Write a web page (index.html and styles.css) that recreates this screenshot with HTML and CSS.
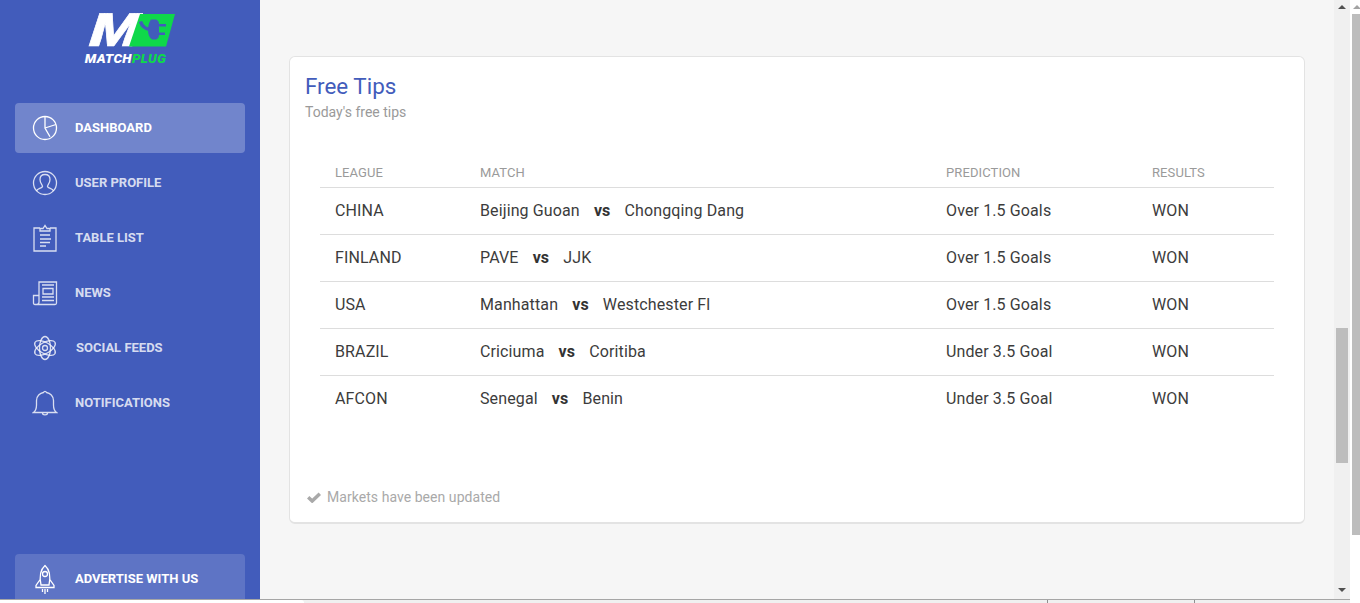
FILE: index.html
```html
<!DOCTYPE html>
<html lang="en">
<head>
<meta charset="utf-8">
<title>Free Tips</title>
<link rel="stylesheet" href="styles.css">
</head>
<body>
<div class="window">
  <div class="frame">
    <aside class="sidebar">
      <div class="logo">
        <div class="logo-mark">
          <span class="logo-m">M</span>
          <svg class="logo-plug" viewBox="0 0 47 34" width="47" height="34">
            <path d="M11 1H46L37 33.500H0Z" fill="#0fd84a"/>
            <path d="M11.500 8.500C13 13 16 16 21 16.500" fill="none" stroke="#425cbb" stroke-width="3.500"/>
            <path d="M22 6.500C20 9 19 13 19 17C19 21 20 24.500 23 26.500H27C29 25.500 30 24 30 22H36V19.500H30V13.500H37V11H30C30 9 29 7 27 6.500Z" fill="#425cbb"/>
          </svg>
        </div>
        <div class="logo-word"><span class="word-white">MATCH</span><span class="word-green">PLUG</span></div>
      </div>
      <nav class="nav">
        <a class="nav-item active">
          <svg class="nav-icon" viewBox="0 0 26 26"><circle cx="13" cy="13" r="11.500"/><path d="M13 1.500V13L18 21.800M13 13L24 9.500"/></svg>
          <span>DASHBOARD</span>
        </a>
        <a class="nav-item">
          <svg class="nav-icon" viewBox="0 0 26 26"><circle cx="13" cy="13" r="11.500"/><path d="M4.500 21C5 18.500 10 18.500 10.500 16.500C10.500 15 8 13 8 9.500C8 6.500 10 4.500 13 4.500C16 4.500 18 6.500 18 9.500C18 13 15.500 15 15.500 16.500C16 18.500 21 18.500 21.500 21"/></svg>
          <span>USER PROFILE</span>
        </a>
        <a class="nav-item">
          <svg class="nav-icon tall-28" viewBox="0 0 26 28"><path d="M8 4H2V27H24V4H18M8 7H18V4.500H15L13 1.500L11 4.500H8ZM8 11H18M8 15H19M8 18.500H18M8 22H14"/></svg>
          <span>TABLE LIST</span>
        </a>
        <a class="nav-item">
          <svg class="nav-icon" viewBox="0 0 26 26"><path d="M7 18V2H24.500V23C24.500 24 24 24.500 23 24.500H3C2 24.500 1.500 24 1.500 23V15.500H7M3.500 24.500C6 24.500 7 23.500 7 22V18M10 5H22M11 8.500H21V14H11ZM10 17H22M10 20.500H22"/></svg>
          <span>NEWS</span>
        </a>
        <a class="nav-item social">
          <svg class="nav-icon" viewBox="0 0 26 26"><circle cx="13" cy="13" r="2.500"/><ellipse cx="13" cy="13" rx="5.500" ry="11.500"/><ellipse cx="13" cy="13" rx="5.500" ry="11.500" transform="rotate(60 13 13)"/><ellipse cx="13" cy="13" rx="5.500" ry="11.500" transform="rotate(120 13 13)"/></svg>
          <span>SOCIAL FEEDS</span>
        </a>
        <a class="nav-item">
          <svg class="nav-icon" viewBox="0 0 26 26"><path d="M1.500 22.500C3.500 21 4.500 19 4.500 15V10.500C4.500 6 8 3 11.500 2.500C12 1 14 1 14.500 2.500C18 3 21.500 6 21.500 10.500V15C21.500 19 22.500 21 24.500 22.500ZM10.500 23C10.500 25.500 15.500 25.500 15.500 23"/></svg>
          <span>NOTIFICATIONS</span>
        </a>
      </nav>
      <a class="nav-item promo">
        <svg class="nav-icon tall-30" viewBox="0 0 26 30"><path d="M9 21C7.500 14 8 6 13 1.500C18 6 18.500 14 17 21ZM8.500 15L4 21.500V23.500H22V21.500L17.500 15M10.500 25V28M13 25V30M15.500 25V28"/><circle cx="13" cy="10" r="2.500"/></svg>
        <span>ADVERTISE WITH US</span>
      </a>
    </aside>
    <main class="content">
      <section class="card">
        <h2 class="card-title">Free Tips</h2>
        <p class="card-sub">Today's free tips</p>
        <table class="tips">
          <thead>
            <tr><th class="c-league">LEAGUE</th><th class="c-match">MATCH</th><th class="c-pred">PREDICTION</th><th class="c-res">RESULTS</th></tr>
          </thead>
          <tbody>
            <tr><td>CHINA</td><td>Beijing Guoan <b>vs</b> Chongqing Dang</td><td>Over 1.5 Goals</td><td>WON</td></tr>
            <tr><td>FINLAND</td><td>PAVE <b>vs</b> JJK</td><td>Over 1.5 Goals</td><td>WON</td></tr>
            <tr><td>USA</td><td>Manhattan <b>vs</b> Westchester Fl</td><td>Over 1.5 Goals</td><td>WON</td></tr>
            <tr><td>BRAZIL</td><td>Criciuma <b>vs</b> Coritiba</td><td>Under 3.5 Goal</td><td>WON</td></tr>
            <tr><td>AFCON</td><td>Senegal <b>vs</b> Benin</td><td>Under 3.5 Goal</td><td>WON</td></tr>
          </tbody>
        </table>
        <div class="card-foot">
          <svg class="check" viewBox="0 0 14 11" width="14" height="11"><path d="M1.200 5.300L5.200 9L12.800 1.800" fill="none" stroke="#a9a9a9" stroke-width="3.500"/></svg>
          <span>Markets have been updated</span>
        </div>
      </section>
    </main>
    <div class="scroll-inner">
      <span class="arrow-up"></span>
      <div class="track"><div class="thumb"></div></div>
      <span class="arrow-down"></span>
    </div>
  </div>
  <div class="scroll-outer">
    <span class="arrow-outer"></span>
    <div class="thumb-outer"></div>
  </div>
  <div class="statusbar">
    <div class="status-white"></div>
    <div class="status-cell wide"></div>
    <div class="status-cell mid"></div>
    <div class="status-cell"></div>
  </div>
</div>
</body>
</html>
```
FILE: styles.css
```css
* { box-sizing: border-box; }
html, body { margin: 0; padding: 0; height: 603px; overflow: hidden; background: #fff; }
body { font-family: Roboto, "Liberation Sans", sans-serif; color: #333; }

.window { position: relative; width: 1360px; height: 603px; overflow: hidden; }
.frame { display: flex; width: 1350px; height: 599px; overflow: hidden; background: #f6f6f6; }

.sidebar { width: 260px; flex: none; height: 604px; background: #425cbb; display: flex; flex-direction: column; padding: 0 15px; }
.logo { height: 103px; padding-top: 13px; display: flex; flex-direction: column; align-items: center; }
.logo-mark { display: flex; align-items: flex-start; height: 34px; margin-left: 6px; }
.logo-m { font: italic 900 46px/34px Roboto, sans-serif; color: #fff; width: 39px; -webkit-text-stroke: .6px #fff; transform: scaleX(1.25) skewX(-5deg); transform-origin: left bottom; margin-left: -1px; margin-right: 1px; }
.logo-plug { display: block; position: relative; }
.logo-word { font: italic 900 13.500px/14px Roboto, sans-serif; margin-top: 4px; margin-left: -9px; letter-spacing: .3px; }
.word-white { color: #fff; }
.word-green { color: #0fd84a; }

.nav { flex: 1; display: flex; flex-direction: column; gap: 5px; }
.nav-item { display: flex; align-items: center; height: 50px; flex: none; padding-left: 17px; border-radius: 4px; color: rgba(255,255,255,.8); font-size: 13px; font-weight: 700; }
.nav-item span { margin-left: 17px; padding-bottom: 2px; }
.nav-item.active { background: rgba(255,255,255,.25); color: #fff; }
.nav-item.promo { background: rgba(255,255,255,.15); color: #fff; }
.nav-item.social span { margin-left: 18px; }
.nav-icon { width: 26px; height: 26px; flex: none; fill: none; stroke: currentColor; stroke-width: 1.300; }
.nav-icon.tall-28 { height: 28px; }
.nav-icon.tall-30 { height: 30px; }

.content { flex: 1; min-width: 0; padding: 56px 29px 0; }
.card { height: 468px; background: #fff; border: 1px solid #e3e3e3; border-bottom-width: 2px; border-radius: 6px; padding: 14px 15px 0; position: relative; display: flex; flex-direction: column; }
.card-title { margin: 0; font-size: 22.400px; font-weight: 400; line-height: 30px; color: #425cbb; }
.card-sub { margin: 1px 0 0; font-size: 14px; line-height: 20px; color: #9a9a9a; }
.tips { width: 954px; margin: 35px 0 0 15px; border-collapse: collapse; table-layout: fixed; }
.tips th { height: 30px; padding: 2px 15px 0; text-align: left; font-size: 13px; letter-spacing: .1px; font-weight: 400; color: #9a9a9a; border-bottom: 1px solid #ddd; }
.tips td { height: 47px; padding: 0 15px; font-size: 16px; letter-spacing: .12px; color: #3c3c3c; border-bottom: 1px solid #ddd; white-space: nowrap; }
.tips tbody tr:last-child td { border-bottom: 0; }
.tips b { font-weight: 700; margin: 0 10px; color: #333; }
.c-league { width: 145px; }
.c-match { width: 466px; }
.c-pred { width: 206px; }
.c-res { width: 137px; }
.card-foot { margin-top: auto; margin-bottom: 15px; display: flex; align-items: center; gap: 6px; padding-left: 2px; height: 20px; font-size: 14px; letter-spacing: .05px; color: #a9a9a9; }

.scroll-inner { width: 16px; flex: none; background: #f0f0f0; display: flex; flex-direction: column; align-items: center; position: relative; }
.arrow-up { margin-top: 5px; border: 4px solid transparent; border-top: 0; border-bottom: 4px solid #505050; }
.track { flex: 1; width: 100%; padding: 319px 2px 0; }
.thumb { height: 135px; background: #bdbdbd; }
.arrow-down { margin-bottom: 7px; border: 4px solid transparent; border-bottom: 0; border-top: 4px solid #505050; }

.scroll-outer { position: absolute; right: 0; top: 0; width: 8px; height: 535px; }
.arrow-outer { position: absolute; left: 1px; top: 5px; border: 4px solid transparent; border-top: 0; border-bottom: 4px solid #a3a3a3; }
.thumb-outer { position: absolute; left: 0; top: 14px; bottom: 0; width: 8px; background: #bdbdbd; }

.statusbar { display: flex; width: 1350px; height: 4px; border-top: 1px solid #a6a6a6; background: #f0f0f0; }
.status-white { width: 304px; background: #fff; border-top-right-radius: 3px; }
.status-cell { flex: 1; border-left: 1px solid #8f8f8f; }
.status-cell.wide { flex: none; width: 743px; border-left: 0; }
.status-cell.mid { flex: none; width: 147px; }
```
